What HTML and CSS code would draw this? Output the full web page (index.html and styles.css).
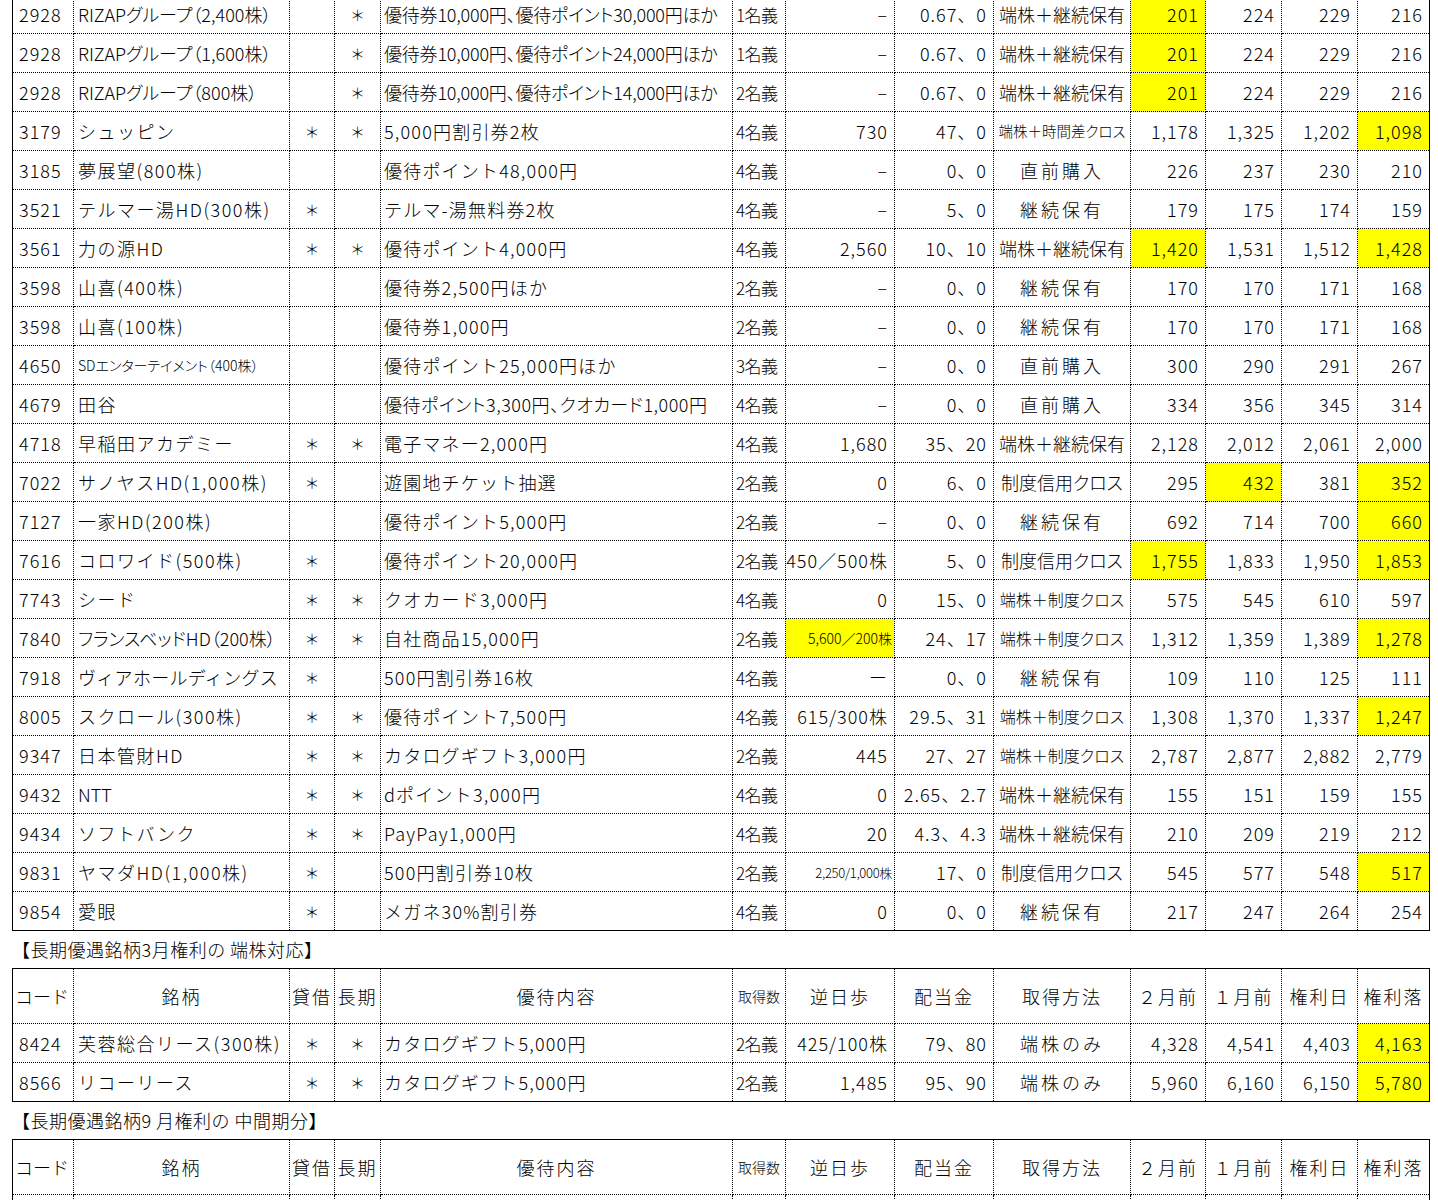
FILE: index.html
```html
<!DOCTYPE html>
<html lang="ja">
<head>
<meta charset="utf-8">
<link rel="stylesheet" href="styles.css">
</head>
<body>
<div class="sheet">
<table class="grid first">
<colgroup><col class="w1"><col class="w2"><col class="w3"><col class="w4"><col class="w5"><col class="w6"><col class="w7"><col class="w8"><col class="w9"><col class="w10"><col class="w11"><col class="w12"><col class="w13"></colgroup>
<tbody>
<tr><td class="c">2928</td><td class="n">RIZAPグループ（2,400株）</td><td class="m"></td><td class="m">＊</td><td class="t tight">優待券10,000円、優待ポイント30,000円ほか</td><td class="q">1名義</td><td class="r">–</td><td class="r">0.67、0</td><td class="k">端株＋継続保有</td><td class="r y">201</td><td class="r">224</td><td class="r">229</td><td class="r">216</td></tr>
<tr><td class="c">2928</td><td class="n">RIZAPグループ（1,600株）</td><td class="m"></td><td class="m">＊</td><td class="t tight">優待券10,000円、優待ポイント24,000円ほか</td><td class="q">1名義</td><td class="r">–</td><td class="r">0.67、0</td><td class="k">端株＋継続保有</td><td class="r y">201</td><td class="r">224</td><td class="r">229</td><td class="r">216</td></tr>
<tr><td class="c">2928</td><td class="n">RIZAPグループ（800株）</td><td class="m"></td><td class="m">＊</td><td class="t tight">優待券10,000円、優待ポイント14,000円ほか</td><td class="q">2名義</td><td class="r">–</td><td class="r">0.67、0</td><td class="k">端株＋継続保有</td><td class="r y">201</td><td class="r">224</td><td class="r">229</td><td class="r">216</td></tr>
<tr><td class="c">3179</td><td class="n w">シュッピン</td><td class="m">＊</td><td class="m">＊</td><td class="t w">5,000円割引券2枚</td><td class="q">4名義</td><td class="r">730</td><td class="r">47、0</td><td class="k xs">端株＋時間差クロス</td><td class="r">1,178</td><td class="r">1,325</td><td class="r">1,202</td><td class="r y">1,098</td></tr>
<tr><td class="c">3185</td><td class="n w">夢展望(800株)</td><td class="m"></td><td class="m"></td><td class="t w">優待ポイント48,000円</td><td class="q">4名義</td><td class="r">–</td><td class="r">0、0</td><td class="k ww">直前購入</td><td class="r">226</td><td class="r">237</td><td class="r">230</td><td class="r">210</td></tr>
<tr><td class="c">3521</td><td class="n w">テルマー湯HD(300株)</td><td class="m">＊</td><td class="m"></td><td class="t w">テルマ-湯無料券2枚</td><td class="q">4名義</td><td class="r">–</td><td class="r">5、0</td><td class="k ww">継続保有</td><td class="r">179</td><td class="r">175</td><td class="r">174</td><td class="r">159</td></tr>
<tr><td class="c">3561</td><td class="n w">力の源HD</td><td class="m">＊</td><td class="m">＊</td><td class="t w">優待ポイント4,000円</td><td class="q">4名義</td><td class="r">2,560</td><td class="r">10、10</td><td class="k">端株＋継続保有</td><td class="r y">1,420</td><td class="r">1,531</td><td class="r">1,512</td><td class="r y">1,428</td></tr>
<tr><td class="c">3598</td><td class="n w">山喜(400株)</td><td class="m"></td><td class="m"></td><td class="t w">優待券2,500円ほか</td><td class="q">2名義</td><td class="r">–</td><td class="r">0、0</td><td class="k ww">継続保有</td><td class="r">170</td><td class="r">170</td><td class="r">171</td><td class="r">168</td></tr>
<tr><td class="c">3598</td><td class="n w">山喜(100株)</td><td class="m"></td><td class="m"></td><td class="t w">優待券1,000円</td><td class="q">2名義</td><td class="r">–</td><td class="r">0、0</td><td class="k ww">継続保有</td><td class="r">170</td><td class="r">170</td><td class="r">171</td><td class="r">168</td></tr>
<tr><td class="c">4650</td><td class="n sm">SDエンターテイメント（400株）</td><td class="m"></td><td class="m"></td><td class="t w">優待ポイント25,000円ほか</td><td class="q">3名義</td><td class="r">–</td><td class="r">0、0</td><td class="k ww">直前購入</td><td class="r">300</td><td class="r">290</td><td class="r">291</td><td class="r">267</td></tr>
<tr><td class="c">4679</td><td class="n w">田谷</td><td class="m"></td><td class="m"></td><td class="t tight2">優待ポイント3,300円、クオカード1,000円</td><td class="q">4名義</td><td class="r">–</td><td class="r">0、0</td><td class="k ww">直前購入</td><td class="r">334</td><td class="r">356</td><td class="r">345</td><td class="r">314</td></tr>
<tr><td class="c">4718</td><td class="n w">早稲田アカデミー</td><td class="m">＊</td><td class="m">＊</td><td class="t w">電子マネー2,000円</td><td class="q">4名義</td><td class="r">1,680</td><td class="r">35、20</td><td class="k">端株＋継続保有</td><td class="r">2,128</td><td class="r">2,012</td><td class="r">2,061</td><td class="r">2,000</td></tr>
<tr><td class="c">7022</td><td class="n w">サノヤスHD(1,000株)</td><td class="m">＊</td><td class="m"></td><td class="t w">遊園地チケット抽選</td><td class="q">2名義</td><td class="r">0</td><td class="r">6、0</td><td class="k">制度信用クロス</td><td class="r">295</td><td class="r y">432</td><td class="r">381</td><td class="r y">352</td></tr>
<tr><td class="c">7127</td><td class="n w">一家HD(200株)</td><td class="m"></td><td class="m"></td><td class="t w">優待ポイント5,000円</td><td class="q">2名義</td><td class="r">–</td><td class="r">0、0</td><td class="k ww">継続保有</td><td class="r">692</td><td class="r">714</td><td class="r">700</td><td class="r y">660</td></tr>
<tr><td class="c">7616</td><td class="n w">コロワイド(500株)</td><td class="m">＊</td><td class="m"></td><td class="t w">優待ポイント20,000円</td><td class="q">2名義</td><td class="r">450／500株</td><td class="r">5、0</td><td class="k">制度信用クロス</td><td class="r y">1,755</td><td class="r">1,833</td><td class="r">1,950</td><td class="r y">1,853</td></tr>
<tr><td class="c">7743</td><td class="n w">シード</td><td class="m">＊</td><td class="m">＊</td><td class="t w">クオカード3,000円</td><td class="q">4名義</td><td class="r">0</td><td class="r">15、0</td><td class="k s">端株＋制度クロス</td><td class="r">575</td><td class="r">545</td><td class="r">610</td><td class="r">597</td></tr>
<tr><td class="c">7840</td><td class="n">フランスベッドHD（200株）</td><td class="m">＊</td><td class="m">＊</td><td class="t w">自社商品15,000円</td><td class="q">2名義</td><td class="r y sm">5,600／200株</td><td class="r">24、17</td><td class="k s">端株＋制度クロス</td><td class="r">1,312</td><td class="r">1,359</td><td class="r">1,389</td><td class="r y">1,278</td></tr>
<tr><td class="c">7918</td><td class="n w0">ヴィアホールディングス</td><td class="m">＊</td><td class="m"></td><td class="t w">500円割引券16枚</td><td class="q">4名義</td><td class="r">ー</td><td class="r">0、0</td><td class="k ww">継続保有</td><td class="r">109</td><td class="r">110</td><td class="r">125</td><td class="r">111</td></tr>
<tr><td class="c">8005</td><td class="n w">スクロール(300株)</td><td class="m">＊</td><td class="m">＊</td><td class="t w">優待ポイント7,500円</td><td class="q">4名義</td><td class="r">615/300株</td><td class="r">29.5、31</td><td class="k s">端株＋制度クロス</td><td class="r">1,308</td><td class="r">1,370</td><td class="r">1,337</td><td class="r y">1,247</td></tr>
<tr><td class="c">9347</td><td class="n w">日本管財HD</td><td class="m">＊</td><td class="m">＊</td><td class="t w">カタログギフト3,000円</td><td class="q">2名義</td><td class="r">445</td><td class="r">27、27</td><td class="k s">端株＋制度クロス</td><td class="r">2,787</td><td class="r">2,877</td><td class="r">2,882</td><td class="r">2,779</td></tr>
<tr><td class="c">9432</td><td class="n">NTT</td><td class="m">＊</td><td class="m">＊</td><td class="t w">dポイント3,000円</td><td class="q">4名義</td><td class="r">0</td><td class="r">2.65、2.7</td><td class="k">端株＋継続保有</td><td class="r">155</td><td class="r">151</td><td class="r">159</td><td class="r">155</td></tr>
<tr><td class="c">9434</td><td class="n w">ソフトバンク</td><td class="m">＊</td><td class="m">＊</td><td class="t w">PayPay1,000円</td><td class="q">4名義</td><td class="r">20</td><td class="r">4.3、4.3</td><td class="k">端株＋継続保有</td><td class="r">210</td><td class="r">209</td><td class="r">219</td><td class="r">212</td></tr>
<tr><td class="c">9831</td><td class="n w">ヤマダHD(1,000株)</td><td class="m">＊</td><td class="m"></td><td class="t w">500円割引券10枚</td><td class="q">2名義</td><td class="r xxs">2,250/1,000株</td><td class="r">17、0</td><td class="k">制度信用クロス</td><td class="r">545</td><td class="r">577</td><td class="r">548</td><td class="r y">517</td></tr>
<tr><td class="c">9854</td><td class="n w">愛眼</td><td class="m">＊</td><td class="m"></td><td class="t w">メガネ30%割引券</td><td class="q">4名義</td><td class="r">0</td><td class="r">0、0</td><td class="k ww">継続保有</td><td class="r">217</td><td class="r">247</td><td class="r">264</td><td class="r">254</td></tr>
</tbody>
</table>

<div class="caption">【長期優遇銘柄3月権利の 端株対応】</div>
<table class="grid">
<colgroup><col class="w1"><col class="w2"><col class="w3"><col class="w4"><col class="w5"><col class="w6"><col class="w7"><col class="w8"><col class="w9"><col class="w10"><col class="w11"><col class="w12"><col class="w13"></colgroup>
<thead>
<tr class="head"><th class="hl">コード</th><th>銘柄</th><th>貸借</th><th>長期</th><th>優待内容</th><th class="hs">取得数</th><th>逆日歩</th><th>配当金</th><th>取得方法</th><th>２月前</th><th>１月前</th><th>権利日</th><th>権利落</th></tr>
</thead>
<tbody>
<tr><td class="c">8424</td><td class="n w">芙蓉総合リース(300株)</td><td class="m">＊</td><td class="m">＊</td><td class="t w">カタログギフト5,000円</td><td class="q">2名義</td><td class="r">425/100株</td><td class="r">79、80</td><td class="k ww">端株のみ</td><td class="r">4,328</td><td class="r">4,541</td><td class="r">4,403</td><td class="r y">4,163</td></tr>
<tr><td class="c">8566</td><td class="n w">リコーリース</td><td class="m">＊</td><td class="m">＊</td><td class="t w">カタログギフト5,000円</td><td class="q">2名義</td><td class="r">1,485</td><td class="r">95、90</td><td class="k ww">端株のみ</td><td class="r">5,960</td><td class="r">6,160</td><td class="r">6,150</td><td class="r y">5,780</td></tr>
</tbody>
</table>

<div class="caption">【長期優遇銘柄9 月権利の 中間期分】</div>
<table class="grid">
<colgroup><col class="w1"><col class="w2"><col class="w3"><col class="w4"><col class="w5"><col class="w6"><col class="w7"><col class="w8"><col class="w9"><col class="w10"><col class="w11"><col class="w12"><col class="w13"></colgroup>
<thead>
<tr class="head"><th class="hl">コード</th><th>銘柄</th><th>貸借</th><th>長期</th><th>優待内容</th><th class="hs">取得数</th><th>逆日歩</th><th>配当金</th><th>取得方法</th><th>２月前</th><th>１月前</th><th>権利日</th><th>権利落</th></tr>
</thead>
<tbody>
<tr><td class="c"></td><td class="n"></td><td class="m"></td><td class="m"></td><td class="t"></td><td class="q"></td><td class="r"></td><td class="r"></td><td class="k"></td><td class="r"></td><td class="r"></td><td class="r"></td><td class="r"></td></tr>
</tbody>
</table>
</div>
</body>
</html>
```

FILE: styles.css
```css
html, body {
  margin: 0;
  padding: 0;
  background: #ffffff;
}

body {
  font-family: "Noto Sans CJK JP", "Noto Sans", sans-serif;
  font-size: 18px;
  font-weight: 300;
  color: #000000;
}

.sheet {
  padding-left: 12px;
  margin-top: -6px;
}

.grid {
  border-collapse: collapse;
  table-layout: fixed;
  width: 1418px;
  border: 1px solid #000;
}

.w1 { width: 61px; }
.w2 { width: 216px; }
.w3 { width: 45px; }
.w4 { width: 46px; }
.w5 { width: 352px; }
.w6 { width: 53px; }
.w7 { width: 109px; }
.w8 { width: 99px; }
.w9 { width: 137px; }
.w10 { width: 75px; }
.w11 { width: 76px; }
.w12 { width: 76px; }
.w13 { width: 72px; }

.grid tr {
  height: 39px;
}

.grid td,
.grid th {
  border: 1px dotted #000;
  padding: 0;
  white-space: nowrap;
  overflow: hidden;
  line-height: 1;
  vertical-align: middle;
  font-weight: 300;
}

.grid tr.head {
  height: 55px;
}

.grid th {
  text-align: center;
  letter-spacing: 2px;
}

.grid th.hl {
  text-align: left;
  padding-left: 2px;
  letter-spacing: 0;
}

.grid th.hs {
  font-size: 14px;
  letter-spacing: 0;
}

.c {
  padding-left: 6px !important;
  letter-spacing: 1px;
}

.n {
  padding-left: 4px !important;
  font-feature-settings: "palt";
}

.n.w {
  font-feature-settings: normal;
  letter-spacing: 1.5px;
}

.n.w0 {
  font-feature-settings: normal;
  letter-spacing: 0.3px;
}

.n.sm {
  font-size: 14px;
}

.m {
  text-align: center;
  font-size: 15px;
}

.t {
  padding-left: 3px !important;
}

.t.tight {
  font-feature-settings: "palt";
  letter-spacing: -0.2px;
}

.t.tight2 {
  font-feature-settings: "palt";
  letter-spacing: 0.5px;
}

.t.w {
  letter-spacing: 1.2px;
}

.q {
  padding-left: 3px !important;
  font-size: 17px;
  letter-spacing: -0.5px;
}

.r {
  text-align: right;
  padding-right: 6px !important;
  letter-spacing: 1px;
}

.r.sm {
  font-size: 14px;
  letter-spacing: 0;
  padding-right: 2px !important;
}

.r.xxs {
  font-size: 13px;
  letter-spacing: -0.3px;
  padding-right: 2px !important;
}

.k {
  text-align: center;
  font-feature-settings: "palt";
}

.k.ww {
  font-feature-settings: normal;
  letter-spacing: 3px;
}

.k.s {
  font-size: 16px;
}

.k.xs {
  font-size: 14.5px;
}

.y {
  background: #ffff00;
}

.caption {
  height: 37px;
  line-height: 37px;
  font-size: 18px;
  letter-spacing: 0.5px;
}
```
